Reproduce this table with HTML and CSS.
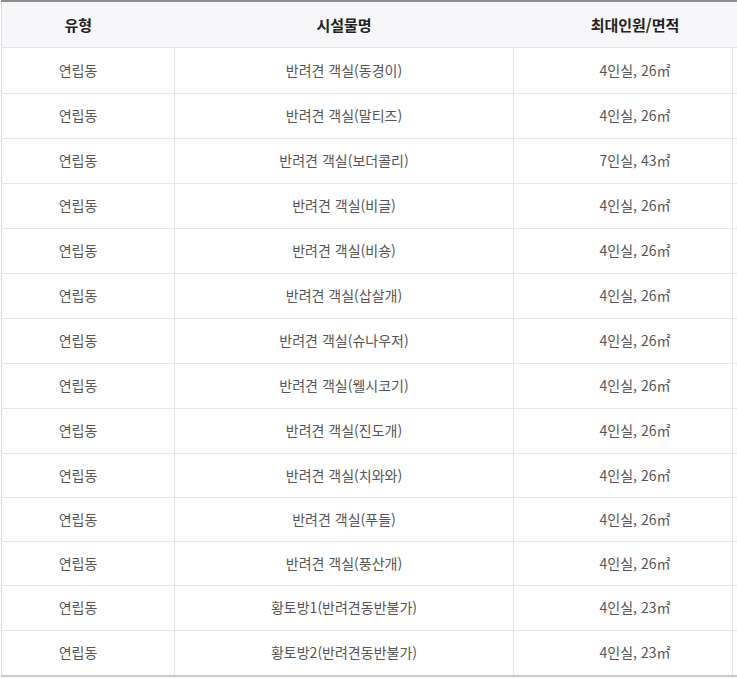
FILE: index.html
```html
<!DOCTYPE html>
<html lang="ko">
<head>
<meta charset="utf-8">
<link rel="stylesheet" href="styles.css">
</head>
<body>
<div class="wrap">
<table class="facility">
  <colgroup>
    <col class="c1"><col class="c2"><col class="c3"><col class="c4">
  </colgroup>
  <thead>
    <tr><th class="t1">유형</th><th>시설물명</th><th class="t3" colspan="2">최대인원/면적</th></tr>
  </thead>
  <tbody>
    <tr class="tall"><td class="t1">연립동</td><td>반려견 객실(동경이)</td><td class="t3">4인실, 26㎡</td><td class="blank"></td></tr>
    <tr><td class="t1">연립동</td><td>반려견 객실(말티즈)</td><td class="t3">4인실, 26㎡</td><td class="blank"></td></tr>
    <tr><td class="t1">연립동</td><td>반려견 객실(보더콜리)</td><td class="t3">7인실, 43㎡</td><td class="blank"></td></tr>
    <tr><td class="t1">연립동</td><td>반려견 객실(비글)</td><td class="t3">4인실, 26㎡</td><td class="blank"></td></tr>
    <tr><td class="t1">연립동</td><td>반려견 객실(비숑)</td><td class="t3">4인실, 26㎡</td><td class="blank"></td></tr>
    <tr><td class="t1">연립동</td><td>반려견 객실(삽살개)</td><td class="t3">4인실, 26㎡</td><td class="blank"></td></tr>
    <tr><td class="t1">연립동</td><td>반려견 객실(슈나우저)</td><td class="t3">4인실, 26㎡</td><td class="blank"></td></tr>
    <tr><td class="t1">연립동</td><td>반려견 객실(웰시코기)</td><td class="t3">4인실, 26㎡</td><td class="blank"></td></tr>
    <tr><td class="t1">연립동</td><td>반려견 객실(진도개)</td><td class="t3">4인실, 26㎡</td><td class="blank"></td></tr>
    <tr class="short"><td class="t1">연립동</td><td>반려견 객실(치와와)</td><td class="t3">4인실, 26㎡</td><td class="blank"></td></tr>
    <tr class="short"><td class="t1">연립동</td><td>반려견 객실(푸들)</td><td class="t3">4인실, 26㎡</td><td class="blank"></td></tr>
    <tr class="short"><td class="t1">연립동</td><td>반려견 객실(풍산개)</td><td class="t3">4인실, 26㎡</td><td class="blank"></td></tr>
    <tr><td class="t1">연립동</td><td>황토방1(반려견동반불가)</td><td class="t3">4인실, 23㎡</td><td class="blank"></td></tr>
    <tr><td class="t1">연립동</td><td>황토방2(반려견동반불가)</td><td class="t3">4인실, 23㎡</td><td class="blank"></td></tr>
  </tbody>
</table>
</div>
</body>
</html>
```
FILE: styles.css
```css
html, body {
  margin: 0;
  padding: 0;
  background: #ffffff;
}
.wrap {
  width: 737px;
  overflow: hidden;
}
.facility {
  width: 736px;
  margin-left: 1px;
  border-collapse: collapse;
  table-layout: fixed;
  font-family: "Noto Sans CJK KR", "Noto Sans", sans-serif;
  border-top: 2px solid #8c8c8c;
  border-bottom: 2px solid #c8c8c8;
  border-left: 1px solid #dcdcdc;
}
.c1 { width: 173px; }
.c2 { width: 339px; }
.c3 { width: 219px; }
.c4 { width: 5px; }
.facility th {
  height: 45px;
  padding: 0;
  background: #f7f7fa;
  color: #222222;
  font-size: 15px;
  font-weight: 700;
  text-align: center;
  border-bottom: 1px solid #e3e3ea;
}
.facility td {
  height: 42px;
  padding: 0 0 2px 0;
  color: #555555;
  font-size: 14px;
  text-align: center;
  border-bottom: 1px solid #e6e6e6;
  border-right: 1px solid #e3e3e3;
}
.facility tr.tall td {
  height: 43px;
}
.facility tr.short td {
  height: 41px;
}
.facility td.blank {
  border-right: none;
}
.facility td.t1,
.facility th.t1 {
  padding-right: 20px;
}
.facility td.t3 {
  padding-left: 24px;
}
.facility th.t3 {
  padding-left: 19px;
}
.facility tbody tr:last-child td {
  border-bottom: none;
}
```
